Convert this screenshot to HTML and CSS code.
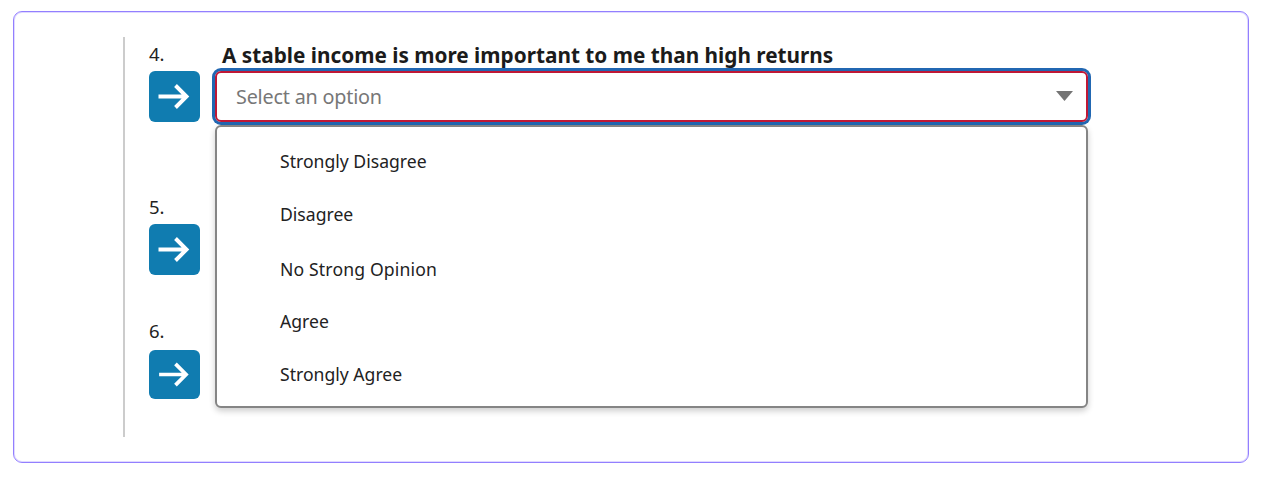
FILE: index.html
```html
<!DOCTYPE html>
<html lang="en">
<head>
<meta charset="utf-8">
<title>Questionnaire</title>
<link rel="stylesheet" href="styles.css">
</head>
<body>
<main class="card">
  <ol class="questions">
    <li class="question">
      <div class="marker">
        <span class="number">4.</span>
        <button class="go" aria-label="Go to question 4"><svg class="arrow" viewBox="0 0 51 51"><path d="M9.5 25.5H37.5M26.5 14.5L37.5 25.5L26.5 36.5"/></svg></button>
      </div>
      <div class="field">
        <div class="title">A stable income is more important to me than high returns</div>
        <div class="select">
          <span class="placeholder">Select an option</span>
          <svg class="caret" viewBox="0 0 17 10"><path d="M0 0H17L8.5 10Z"/></svg>
          <ul class="menu">
            <li class="option">Strongly Disagree</li>
            <li class="option">Disagree</li>
            <li class="option wide">No Strong Opinion</li>
            <li class="option">Agree</li>
            <li class="option">Strongly Agree</li>
          </ul>
        </div>
      </div>
    </li>
    <li class="question second">
      <div class="marker">
        <span class="number">5.</span>
        <button class="go" aria-label="Go to question 5"><svg class="arrow" viewBox="0 0 51 51"><path d="M9.5 25.5H37.5M26.5 14.5L37.5 25.5L26.5 36.5"/></svg></button>
      </div>
    </li>
    <li class="question third">
      <div class="marker">
        <span class="number">6.</span>
        <button class="go short" aria-label="Go to question 6"><svg class="arrow" viewBox="0 0 51 51"><path d="M9.5 25.5H37.5M26.5 14.5L37.5 25.5L26.5 36.5"/></svg></button>
      </div>
    </li>
  </ol>
</main>
</body>
</html>
```

FILE: styles.css
```css
* { box-sizing: border-box; }
body {
  margin: 0;
  padding: 11.3px 16px 0 13.2px;
  height: 477px;
  overflow: hidden;
  background: #fff;
  font-family: "Noto Sans", "Open Sans", sans-serif;
  color: #222;
}
.card {
  height: 451.7px;
  border: 1px solid #937fff;
  border-radius: 9px;
  padding: 24.7px 0 0 108.8px;
  box-shadow: inset 0 0 0 1px #e0daff;
}
.questions {
  list-style: none;
  margin: 0;
  padding: 0 0 0 24px;
  height: 400px;
  border-left: 2px solid #ccc;
}
.question { display: flex; gap: 15px; }
.second { margin-top: 68px; }
.third { margin-top: 41px; }
.marker { width: 51px; }
.number {
  display: block;
  height: 34px;
  line-height: 33px;
  font-size: 18.5px;
}
.third .number { line-height: 30px; }
.go {
  display: block;
  width: 51px;
  height: 51px;
  padding: 0;
  border: 0;
  border-radius: 6px;
  background: #107cb0;
}
.short { height: 49px; }
.arrow { display: block; width: 100%; height: 100%; }
.arrow path { fill: none; stroke: #fff; stroke-width: 3.9; }
.field { width: 873px; }
.title {
  position: relative;
  z-index: 1;
  height: 34px;
  padding-left: 7px;
  line-height: 36px;
  font-size: 20.78px;
  font-weight: 700;
  white-space: nowrap;
  color: #1b1b1b;
}
.select {
  position: relative;
  display: flex;
  align-items: center;
  justify-content: space-between;
  height: 51px;
  padding: 0 13px 0 19px;
  border: 2px solid #bf1736;
  border-radius: 6px;
  box-shadow: 0 0 0 3px #2167b2;
}
.placeholder {
  padding-top: 1px;
  font-size: 19.8px;
  letter-spacing: -0.2px;
  color: #777;
}
.caret { width: 17px; height: 10px; fill: #747474; }
.menu {
  position: absolute;
  top: 52.5px;
  left: -2px;
  width: 873px;
  height: 283px;
  margin: 0;
  padding: 7.3px 0 0 63px;
  list-style: none;
  background: #fff;
  border: 2px solid #858585;
  border-radius: 6px;
  box-shadow: 0 3px 6px rgba(0, 0, 0, 0.2);
}
.option {
  height: 53.4px;
  line-height: 53.4px;
  font-size: 17.6px;
}
.wide { line-height: 55.4px; letter-spacing: 0.15px; }
```
